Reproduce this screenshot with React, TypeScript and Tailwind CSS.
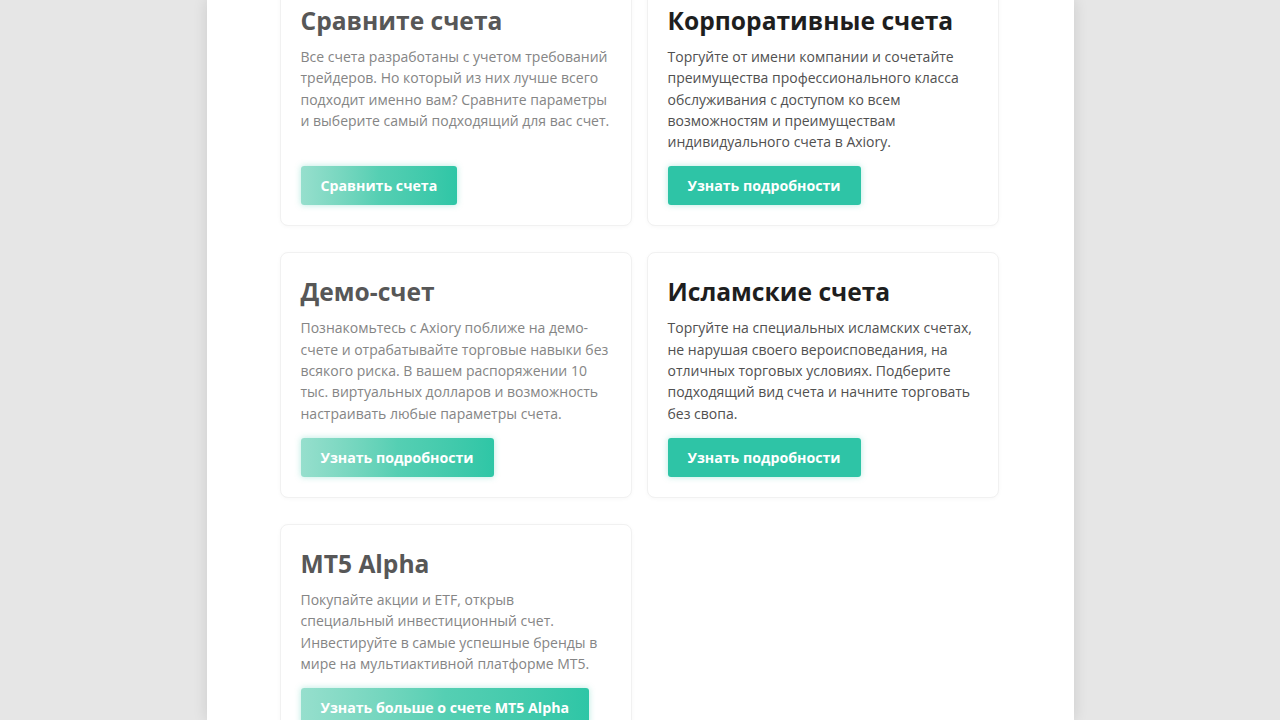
import type { ReactNode } from "react";

interface Account {
  title: string;
  text: string;
  cta: string;
  faded?: boolean;
}

const accounts: Account[] = [
  {
    title: "Сравните счета",
    text: "Все счета разработаны с учетом требований трейдеров. Но который из них лучше всего подходит именно вам? Сравните параметры и выберите самый подходящий для вас счет.",
    cta: "Сравнить счета",
    faded: true,
  },
  {
    title: "Корпоративные счета",
    text: "Торгуйте от имени компании и сочетайте преимущества профессионального класса обслуживания с доступом ко всем возможностям и преимуществам индивидуального счета в Axiory.",
    cta: "Узнать подробности",
  },
  {
    title: "Демо-счет",
    text: "Познакомьтесь с Axiory поближе на демо-счете и отрабатывайте торговые навыки без всякого риска. В вашем распоряжении 10 тыс. виртуальных долларов и возможность настраивать любые параметры счета.",
    cta: "Узнать подробности",
    faded: true,
  },
  {
    title: "Исламские счета",
    text: "Торгуйте на специальных исламских счетах, не нарушая своего вероисповедания, на отличных торговых условиях. Подберите подходящий вид счета и начните торговать без свопа.",
    cta: "Узнать подробности",
  },
  {
    title: "MT5 Alpha",
    text: "Покупайте акции и ETF, открыв специальный инвестиционный счет. Инвестируйте в самые успешные бренды в мире на мультиактивной платформе MT5.",
    cta: "Узнать больше о счете MT5 Alpha",
    faded: true,
  },
];

function CtaButton({ faded, children }: { faded?: boolean; children: ReactNode }) {
  return (
    <button
      type="button"
      className={`h-[39px] px-5 rounded-[3px] text-[14.2px] font-bold text-white shadow-[0_0_6px_rgba(46,196,166,0.35)] ${
        faded
          ? "bg-gradient-to-r from-[#96dfcd] via-[#55cfb3] to-[#2ec6a6]"
          : "bg-[#2ec4a6]"
      }`}
    >
      {children}
    </button>
  );
}

function AccountCard({ account }: { account: Account }) {
  return (
    <div className="flex flex-col rounded-lg border border-[#f1f1f1] bg-white px-5 pt-[23px] pb-5 shadow-[0_1px_4px_rgba(0,0,0,0.03)]">
      <h3
        className={`text-[24.6px] leading-8 font-bold ${
          account.faded ? "text-[#575757]" : "text-[#1e1e1e]"
        }`}
      >
        {account.title}
      </h3>
      <p
        className={`mt-[9px] mb-[14px] text-[14px] leading-[21.3px] ${
          account.faded ? "text-[#858585]" : "text-[#505050]"
        }`}
      >
        {account.text}
      </p>
      <div className="mt-auto flex">
        <CtaButton faded={account.faded}>{account.cta}</CtaButton>
      </div>
    </div>
  );
}

export default function App() {
  return (
    <div
      className="h-[720px] overflow-hidden bg-[#e6e6e6]"
      style={{ fontFamily: '"Open Sans", "Noto Sans", sans-serif' }}
    >
      <div className="flow-root mx-auto h-full w-[867px] bg-white shadow-[0_0_14px_rgba(0,0,0,0.12)]">
        <div className="-mt-[19px] grid grid-cols-2 gap-x-[15px] gap-y-[26px] pl-[73px] pr-[75px]">
          {accounts.map((a) => (
            <AccountCard key={a.title} account={a} />
          ))}
        </div>
      </div>
    </div>
  );
}
